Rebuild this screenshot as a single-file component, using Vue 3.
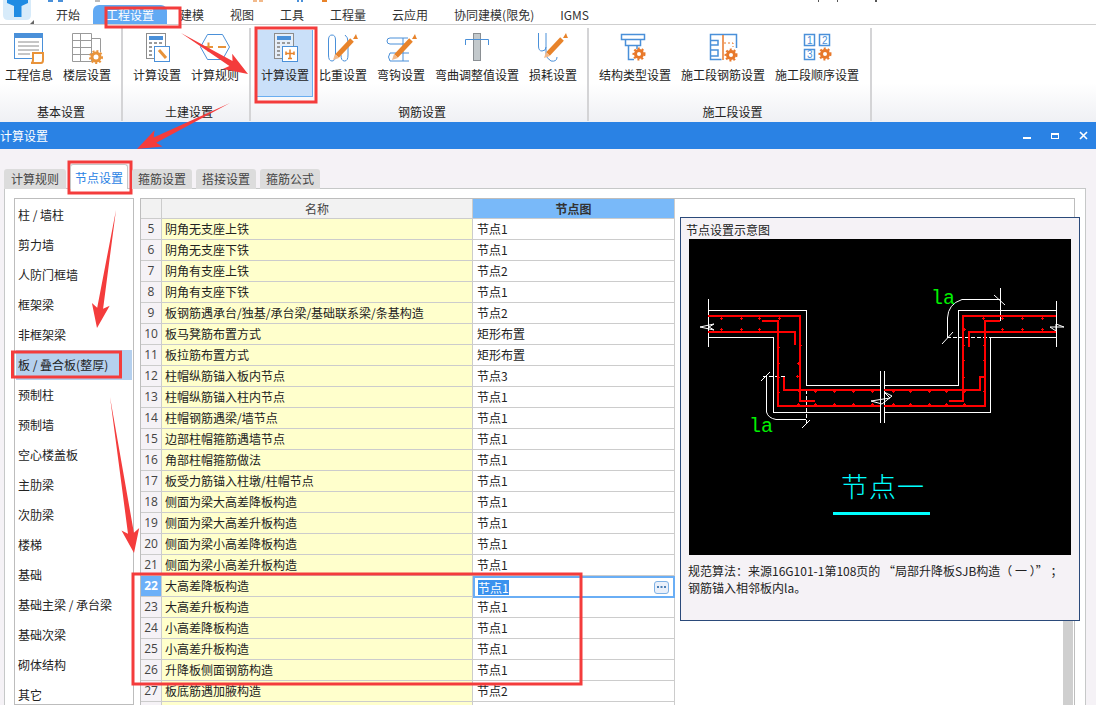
<script setup>
const menus = ['开始', '工程设置', '建模', '视图', '工具', '工程量', '云应用', '协同建模(限免)', 'IGMS']
const tabs = ['计算规则', '节点设置', '箍筋设置', '搭接设置', '箍筋公式']
const sideItems = ['柱 / 墙柱', '剪力墙', '人防门框墙', '框架梁', '非框架梁', '板 / 叠合板(整厚)', '预制柱', '预制墙', '空心楼盖板', '主肋梁', '次肋梁', '楼梯', '基础', '基础主梁 / 承台梁', '基础次梁', '砌体结构', '其它']
const rows = [
  [5, '阴角无支座上铁', '节点1'],
  [6, '阴角无支座下铁', '节点1'],
  [7, '阴角有支座上铁', '节点2'],
  [8, '阴角有支座下铁', '节点1'],
  [9, '板钢筋遇承台/独基/承台梁/基础联系梁/条基构造', '节点2'],
  [10, '板马凳筋布置方式', '矩形布置'],
  [11, '板拉筋布置方式', '矩形布置'],
  [12, '柱帽纵筋锚入板内节点', '节点3'],
  [13, '柱帽纵筋锚入柱内节点', '节点1'],
  [14, '柱帽钢筋遇梁/墙节点', '节点1'],
  [15, '边部柱帽箍筋遇墙节点', '节点1'],
  [16, '角部柱帽箍筋做法', '节点1'],
  [17, '板受力筋锚入柱墩/柱帽节点', '节点1'],
  [18, '侧面为梁大高差降板构造', '节点1'],
  [19, '侧面为梁大高差升板构造', '节点1'],
  [20, '侧面为梁小高差降板构造', '节点1'],
  [21, '侧面为梁小高差升板构造', '节点1'],
  [22, '大高差降板构造', '节点1'],
  [23, '大高差升板构造', '节点1'],
  [24, '小高差降板构造', '节点1'],
  [25, '小高差升板构造', '节点1'],
  [26, '升降板侧面钢筋构造', '节点1'],
  [27, '板底筋遇加腋构造', '节点2'],
  ['', '', '']
]

// red arrows drawn over the screen, from tail to tip
function arrow(x1, y1, x2, y2) {
  const dx = x2 - x1
  const dy = y2 - y1
  const len = Math.hypot(dx, dy)
  const ux = dx / len
  const uy = dy / len
  const nx = -uy
  const ny = ux
  const at = (back, side) => (x2 - ux * back + nx * side).toFixed(1) + ',' + (y2 - uy * back + ny * side).toFixed(1)
  return [x1 + ',' + y1, at(20, 3), at(24, 9), x2 + ',' + y2, at(24, -9), at(20, -3)].join(' ')
}
const arrows = [
  arrow(181, 33, 248, 74),
  arrow(230, 103, 137, 149),
  arrow(116, 210, 97, 328),
  arrow(110, 397, 134, 553)
]

// little rebar ticks in the node drawing
const ticks = [
  [721, 318], [741, 318], [759, 318], [779, 318], [721, 329], [741, 329], [759, 329],
  [778, 347], [778, 363], [778, 377], [778, 392], [800, 345], [798, 363], [797, 376], [798, 390],
  [815, 391], [834, 391], [853, 391], [872, 391], [815, 404], [834, 404], [853, 404], [872, 404], [798, 404],
  [893, 391], [910, 391], [929, 391], [946, 391], [893, 404], [910, 404], [929, 404], [946, 404], [964, 404],
  [964, 391], [984, 391], [963, 345], [963, 360], [963, 377], [984, 345], [984, 360], [984, 376],
  [983, 318], [1022, 318], [1042, 318], [1002, 318], [1022, 329], [1042, 329], [1002, 329], [964, 329]
]

// bottoms of the quick access icons, cut off by the top edge of the screenshot
const topBits = [
  [48, 5, '#4a90d9'], [58, 5, '#4a90d9'], [95, 5, '#bbb'], [253, 4, '#f2b98a'], [259, 4, '#f2b98a'],
  [297, 2, '#4a90d9'], [301, 2, '#4a90d9'], [322, 5, '#e8832a'], [818, 1, '#555'], [837, 1, '#555'], [875, 2, '#555']
]
</script>

<template>
  <div class="screen">
    <div class="menuBar">
      <div class="logo">
        <svg width="32" height="22" viewBox="0 0 32 22">
          <path d="M3 0H31V15Q31 20 26 20H8Q3 20 3 15Z" fill="#d7ebfa" />
          <path d="M7 0H28V3L21.500 6V17H14V6L7 3Z" fill="#1f8be3" />
        </svg>
        <i class="logoCorner"></i>
      </div>
      <div v-for="m in menus" :key="m" class="menuItem" :class="{ active: m === '工程设置' }">{{ m }}</div>
      <i v-for="b in topBits" :key="b[0]" class="topBit" :style="{ left: b[0] + 'px', width: b[1] + 'px', background: b[2] }"></i>
    </div>

    <div class="ribbon">
      <div class="group g1">
        <div class="buttons">
          <div class="rb">
            <svg width="32" height="32" viewBox="0 0 32 32" fill="none">
              <rect x="1.500" y="1.500" width="28" height="25" fill="#fff" stroke="#4a90d9" />
              <rect x="1" y="1" width="29" height="5" fill="#4a90d9" />
              <path d="M5 10H26M5 14H26M5 18H26M5 22H17" stroke="#8c8c8c" />
              <path d="M18 31H28Q30 31 30 28V21H20V28Q20 31 18 31Z" fill="#fff" stroke="#e8933a" stroke-width="2" />
            </svg>
            <span>工程信息</span>
          </div>
          <div class="rb">
            <svg width="32" height="32" viewBox="0 0 32 32" fill="none">
              <path d="M1.500 1.500H20.500V29.500H1.500ZM20.500 6.500H29.500V20M1.500 8.500H20.500M1.500 15.500H20.500M1.500 22.500H20.500M9.500 1.500V29.500" stroke="#9a9a9a" />
              <circle cx="25" cy="25" r="4" stroke="#e8933a" stroke-width="3" />
              <circle cx="25" cy="25" r="6" stroke="#e8933a" stroke-width="2" stroke-dasharray="2 2" />
            </svg>
            <span>楼层设置</span>
          </div>
        </div>
        <div class="groupName">基本设置</div>
      </div>

      <div class="group g2">
        <div class="buttons">
          <div class="rb">
            <svg width="32" height="32" viewBox="0 0 32 32" fill="none">
              <rect x="5.500" y="1.500" width="19" height="25" fill="#fff" stroke="#8c8c8c" />
              <rect x="8" y="4" width="14" height="4" fill="#4a90d9" />
              <path d="M8 11H22M8 15H22M8 19H22M8 23H22" stroke="#9a9a9a" stroke-width="2" stroke-dasharray="3 2" />
              <rect x="13.500" y="14.500" width="15" height="15" fill="#fff" stroke="#4a90d9" />
              <path d="M18 18L25 26" stroke="#e8933a" stroke-width="3" />
            </svg>
            <span>计算设置</span>
          </div>
          <div class="rb">
            <svg width="32" height="32" viewBox="0 0 32 32" fill="none">
              <path d="M8.500 2.500H23.500L30.500 15L23.500 27.500H8.500L1.500 15Z" stroke="#4a90d9" />
              <path d="M5 15H14M9.500 10.500V19.500M19 15H27" stroke="#e8933a" stroke-width="2" />
            </svg>
            <span>计算规则</span>
          </div>
        </div>
        <div class="groupName">土建设置</div>
      </div>

      <div class="group g3">
        <div class="buttons">
          <div class="rb current">
            <svg width="32" height="32" viewBox="0 0 32 32" fill="none">
              <rect x="5.500" y="1.500" width="19" height="25" fill="#e6eef8" stroke="#8c8c8c" />
              <rect x="8" y="4" width="14" height="4" fill="#4a90d9" />
              <path d="M8 11H22M8 15H22M8 19H22M8 23H22" stroke="#9a9a9a" stroke-width="2" stroke-dasharray="3 2" />
              <rect x="13.500" y="14.500" width="15" height="15" fill="#fff" stroke="#4a90d9" />
              <path d="M21 17.500V26.500M17 21.500H25M17 19.500V23M25 19.500V23M19 26.500H23" stroke="#e8832a" stroke-width="1.500" />
            </svg>
            <span>计算设置</span>
          </div>
          <div class="rb">
            <svg width="32" height="32" viewBox="0 0 32 32" fill="none">
              <path d="M5 3Q1.500 3 1.500 8V23Q1.500 29 5 29Q8.500 29 8.500 23V8Q8.500 3 5 3ZM18 3Q21 5 21 10V23Q21 29 17.500 29Q14 29 14 23" stroke="#4a90d9" />
              <path d="M10 24L25 8" stroke="#e8832a" stroke-width="5" />
              <path d="M26 7L29 2L30 5L31 7Z" fill="#e8832a" />
              <path d="M6 28L8 22L12 26Z" fill="#f2b98a" />
            </svg>
            <span>比重设置</span>
          </div>
          <div class="rb">
            <svg width="32" height="32" viewBox="0 0 32 32" fill="none">
              <path d="M23 6H5Q2 6 2 9Q2 12 5 12H20M18 6V29M5 21H24M5 29H24M5 21Q2 25 5 29" stroke="#4a90d9" />
              <path d="M11 24L26 8" stroke="#e8832a" stroke-width="5" />
              <path d="M27 7L30 2L31 5L32 7Z" fill="#e8832a" />
              <path d="M7 28L9 22L13 26Z" fill="#f2b98a" />
            </svg>
            <span>弯钩设置</span>
          </div>
          <div class="rb">
            <svg width="32" height="32" viewBox="0 0 32 32" fill="none">
              <rect x="12.500" y="1.500" width="7" height="27" fill="#c3c9cc" stroke="#8a8f93" />
              <path d="M4.500 13V7.500H27.500V13" stroke="#4a90d9" />
            </svg>
            <span>弯曲调整值设置</span>
          </div>
          <div class="rb">
            <svg width="32" height="32" viewBox="0 0 32 32" fill="none">
              <path d="M1.500 1V14Q1.500 19 5 19Q9 19 9 15M9 1V22Q9 26 14 29Q20 30 20 25" stroke="#4a90d9" />
              <path d="M11 22L25 7" stroke="#e8832a" stroke-width="5" />
              <path d="M26 6L29 1L30 4L31 6Z" fill="#e8832a" />
              <path d="M7 26L9 20L13 24Z" fill="#f2b98a" />
            </svg>
            <span>损耗设置</span>
          </div>
        </div>
        <div class="groupName">钢筋设置</div>
      </div>

      <div class="group g4">
        <div class="buttons">
          <div class="rb">
            <svg width="32" height="32" viewBox="0 0 32 32" fill="none">
              <path d="M2.500 2.500H25.500V7.500H2.500ZM6.500 7.500H21.500V13.500H6.500ZM9.500 13.500V27.500H15" stroke="#4a90d9" stroke-width="1.500" />
              <path d="M18 13.500V17" stroke="#4a90d9" stroke-width="1.500" />
              <circle cx="20" cy="22" r="3.500" stroke="#e8782a" stroke-width="3" />
              <circle cx="20" cy="22" r="5.500" stroke="#e8782a" stroke-width="2" stroke-dasharray="2 2" />
            </svg>
            <span>结构类型设置</span>
          </div>
          <div class="rb">
            <svg width="32" height="32" viewBox="0 0 32 32" fill="none">
              <path d="M16 2.500H3.500V27.500H14.500M16 2.500H29.500V16M4 8.500H11V13H4M4 18H11V24H4" stroke="#4a90d9" stroke-width="1.500" />
              <path d="M16 3V28" stroke="#e8782a" stroke-width="1.500" />
              <path d="M17 11H26V15" stroke="#e8782a" stroke-dasharray="2 2" />
              <circle cx="24" cy="23" r="3.500" stroke="#e8782a" stroke-width="3" />
              <circle cx="24" cy="23" r="5.500" stroke="#e8782a" stroke-width="2" stroke-dasharray="2 2" />
            </svg>
            <span>施工段钢筋设置</span>
          </div>
          <div class="rb">
            <svg width="32" height="32" viewBox="0 0 32 32" fill="none" font-family="Liberation Sans, sans-serif" font-size="10">
              <rect x="3.500" y="2.500" width="10" height="11" stroke="#4a90d9" stroke-width="1.500" />
              <rect x="18.500" y="2.500" width="10" height="11" stroke="#4a90d9" stroke-width="1.500" />
              <rect x="3.500" y="17.500" width="10" height="10" stroke="#4a90d9" stroke-width="1.500" />
              <text x="6" y="12" fill="#4a90d9">1</text>
              <text x="21" y="12" fill="#4a90d9">2</text>
              <text x="6" y="26" fill="#4a90d9">3</text>
              <circle cx="24" cy="22" r="3.500" stroke="#e8782a" stroke-width="3" />
              <circle cx="24" cy="22" r="5.500" stroke="#e8782a" stroke-width="2" stroke-dasharray="2 2" />
            </svg>
            <span>施工段顺序设置</span>
          </div>
        </div>
        <div class="groupName">施工段设置</div>
      </div>
    </div>

    <div class="titleBar">
      <span class="titleText">计算设置</span>
      <div class="winBtns">
        <i class="winMin"></i>
        <i class="winMax"></i>
        <svg width="9" height="9" viewBox="0 0 9 9"><path d="M1 1L8 8M8 1L1 8" stroke="#fff" stroke-width="1.600" /></svg>
      </div>
    </div>

    <div class="dialog">
      <div class="tabs">
        <div v-for="t in tabs" :key="t" class="tab" :class="{ on: t === '节点设置' }">{{ t }}</div>
      </div>

      <div class="panel">
        <div class="sideList">
          <div v-for="s in sideItems" :key="s" class="sideItem" :class="{ on: s === '板 / 叠合板(整厚)' }">{{ s }}</div>
        </div>

        <div class="tableBox">
          <div class="grid">
            <div class="row head">
              <div class="num"></div>
              <div class="name">名称</div>
              <div class="val">节点图</div>
            </div>
            <div v-for="(r, i) in rows" :key="i" class="row" :class="{ sel: r[0] === 22 }">
              <div class="num">{{ r[0] }}</div>
              <div class="name">{{ r[1] }}</div>
              <div class="val">
                <span class="valText">{{ r[2] }}</span>
                <span v-if="r[0] === 22" class="more">
                  <svg width="9" height="3" viewBox="0 0 9 3"><path d="M0 0H2V2H0ZM3.500 0H5.500V2H3.500ZM7 0H9V2H7Z" fill="#4c7fb5" /></svg>
                </span>
              </div>
            </div>
          </div>
          <div class="scrollTrack"><div class="scrollThumb"></div></div>
        </div>
      </div>
    </div>

    <!-- preview popup that lies over the grid -->
    <div class="preview">
      <div class="previewTitle">节点设置示意图</div>
      <svg class="drawing" width="382" height="316" viewBox="689 239 382 316" fill="none" shape-rendering="crispEdges">
        <g stroke="#fff">
          <path d="M708.500 299V347M708.500 310.500H806.500V385.500H880M884 385.500H958.500V310.500H1056.500M1056.500 301V347" />
          <path d="M708.500 337.500H773.500V412.500H880M884 412.500H990.500V337.500H1056.500" />
          <path d="M880.500 371V423M884.500 371V423" />
          <path d="M1000.500 288V311M962 299.500H1000" />
          <path d="M1000.500 311V322M947 337.500H990M763 376.500H785M806.500 390V424" stroke-dasharray="4 2" />
          <path d="M947.500 337V318Q948 304 962 299.500" shape-rendering="auto" />
          <path d="M766.500 376V412Q768 418 776 419.500H806" shape-rendering="auto" />
          <path d="M942 344L953 332M994 295L1005 305M761 381L770 372M802 428L810 420" shape-rendering="auto" />
          <path d="M700 327L714 324L709 327L714 330L700 327ZM1050 327L1064 327L1056 324V331ZM871 401L890 398L884 392L892 396L882 404Z" shape-rendering="auto" />
        </g>
        <g stroke="#f00" stroke-width="2">
          <path d="M708 316H800V401H815" />
          <path d="M708 332H795V345" />
          <path d="M762 321H778V406H880M884 406H985V321H1000" />
          <path d="M784 377V390H880M884 390H980V377H985" />
          <path d="M949 401H963V316H1056" />
          <path d="M969 347V332H1056" />
        </g>
        <g stroke="#f00">
          <path v-for="(t, i) in ticks" :key="i" :d="'M' + (t[0] - 1.500) + ' ' + t[1] + 'H' + (t[0] + 1.500) + 'M' + t[0] + ' ' + (t[1] - 1.500) + 'V' + (t[1] + 1.500)" />
        </g>
        <text x="931" y="304" class="laText">la</text>
        <text x="749" y="432" class="laText">la</text>
        <text x="841" y="497" class="nodeText">节点一</text>
        <rect x="833" y="512" width="97" height="3" fill="#00ffff" />
      </svg>
      <div class="previewNote">规范算法：来源16G101-1第108页的 “局部升降板SJB构造（ 一 ）” ；<br />钢筋锚入相邻板内la。</div>
    </div>

    <!-- red markup drawn on top of the screenshot -->
    <svg class="markup" width="1096" height="705" viewBox="0 0 1096 705" fill="none">
      <g stroke="#f43c3c" stroke-width="3">
        <rect x="106" y="8" width="74" height="19" />
        <rect x="256" y="28" width="60" height="74" />
        <rect x="69" y="162" width="62" height="31" />
        <rect x="12.500" y="352" width="108" height="25" />
        <rect x="133" y="574" width="448" height="110" />
      </g>
      <polygon v-for="(a, i) in arrows" :key="i" :points="a" fill="#f43c3c" />
    </svg>
  </div>
</template>

<style scoped>
.screen {
  position: relative;
  width: 1096px;
  height: 705px;
  overflow: hidden;
  display: flex;
  flex-direction: column;
  background: #fff;
  color: #222;
  font-family: "Noto Sans CJK SC", "Noto Sans", sans-serif;
  font-size: 12px;
  line-height: 16px;
}

.menuBar {
  position: relative;
  display: flex;
  align-items: flex-end;
  flex: none;
  height: 25px;
  box-sizing: border-box;
  border-bottom: 1px solid #cfcfcf;
}
.topBit {
  position: absolute;
  top: 0;
  height: 2px;
}
.logo {
  position: relative;
  width: 43px;
  height: 24px;
}
.logo svg {
  display: block;
}
.logoCorner {
  position: absolute;
  left: 30px;
  top: 20px;
  border-left: 4px solid transparent;
  border-bottom: 4px solid #666;
}
.menuItem {
  padding: 0 13px;
  height: 19px;
  line-height: 19px;
  color: #333;
}
.menuItem.active {
  background: #61a9f3;
  border-radius: 6px 6px 0 0;
  color: #fff;
}

.ribbon {
  display: flex;
  flex: none;
  height: 97px;
  background: linear-gradient(#fff 0, #fff 60%, #eff0f4 100%);
}
.group {
  display: flex;
  flex-direction: column;
  box-sizing: border-box;
  height: 93px;
  margin-top: 3px;
  border-right: 2px solid #d4d4d6;
}
.g1 { width: 123px; padding-left: 1px; }
.g2 { width: 128px; padding-left: 6px; }
.g3 { width: 338px; padding-left: 6px; }
.g4 { width: 283px; padding-left: 6px; }
.buttons {
  display: flex;
  gap: 2px;
  height: 70px;
  flex: none;
  padding-top: 2px;
  box-sizing: border-box;
}
.rb {
  display: flex;
  flex-direction: column;
  align-items: center;
  padding: 2px 4px 0;
  box-sizing: border-box;
  height: 67px;
  white-space: nowrap;
}
.rb span {
  margin-top: 3px;
}
.rb svg {
  flex: none;
}
.rb.current {
  background: #cae0f9;
  border-right: 1px solid #6aaef0;
  border-bottom: 1px solid #6aaef0;
  padding-right: 3px;
}
.groupName {
  text-align: center;
  margin-top: 6px;
  line-height: 16px;
}

.titleBar {
  display: flex;
  align-items: center;
  justify-content: space-between;
  flex: none;
  height: 27px;
  background: #2a82e4;
  color: #fff;
}
.winBtns {
  display: flex;
  align-items: center;
  gap: 20px;
  margin-right: 8px;
}
.winMin {
  width: 8px;
  height: 2px;
  margin-top: 4px;
  background: #fff;
}
.winMax {
  width: 8px;
  height: 6px;
  box-sizing: border-box;
  border: 1px solid #fff;
  border-top-width: 2px;
}

.dialog {
  flex: 1;
  min-height: 0;
  display: flex;
  flex-direction: column;
  background: #f5f2f6;
  padding: 0 10px 0 4px;
}
.tabs {
  display: flex;
  align-items: flex-end;
  flex: none;
  height: 40px;
  gap: 4px;
  margin-bottom: -1px;
  position: relative;
  z-index: 1;
}
.tab {
  width: 60px;
  height: 20px;
  line-height: 20px;
  text-align: center;
  background: #dcdcdc;
  border-radius: 3px 3px 0 0;
  color: #444;
}
.tab:first-child {
  width: 62px;
}
.tab.on {
  width: 58px;
  height: 25px;
  line-height: 25px;
  background: #fff;
  color: #2a82e4;
  border: 1px solid #c6c8c8;
  border-bottom: 0;
  box-sizing: border-box;
}
.panel {
  flex: 1;
  min-height: 0;
  display: flex;
  gap: 6px;
  padding: 9px 10px 0 9px;
  background: #fff;
  border: 1px solid #c6c8c8;
  border-bottom: 0;
}

.sideList {
  width: 120px;
  flex: none;
  box-sizing: border-box;
  border: 1px solid #bdbdbd;
  padding: 1px;
}
.sideItem {
  height: 30px;
  line-height: 30px;
  padding-left: 2px;
  white-space: nowrap;
}
.sideItem.on {
  background: #b5d0ee;
}

.tableBox {
  flex: 1;
  min-width: 0;
  display: flex;
  justify-content: space-between;
  border: 1px solid #bdbdbd;
  border-left: 0;
  border-bottom: 0;
}
.grid {
  width: 535px;
  border-left: 1px solid #bdbdbd;
  box-sizing: border-box;
}
.row {
  display: flex;
  height: 21px;
  line-height: 20px;
  box-sizing: border-box;
  border-bottom: 1px solid #ccc;
}
.row.head {
  height: 20px;
  line-height: 19px;
}
.num {
  width: 21px;
  flex: none;
  box-sizing: border-box;
  border-right: 1px solid #ccc;
  background: #f5f2f6;
  text-align: center;
  font-family: "Open Sans", sans-serif;
  font-size: 12px;
  color: #444;
}
.name {
  width: 311px;
  flex: none;
  box-sizing: border-box;
  padding-left: 3px;
  border-right: 1px solid #ccc;
  background: #ffffcc;
  white-space: nowrap;
}
.val {
  flex: 1;
  min-width: 0;
  box-sizing: border-box;
  padding-left: 4px;
  border-right: 1px solid #ccc;
  white-space: nowrap;
}
.head .num,
.head .name {
  background: #f2f2f2;
  text-align: center;
  padding-left: 0;
  color: #444;
}
.head .val {
  background: #79b9f9;
  text-align: center;
  padding-left: 0;
  color: #333;
  font-weight: 700;
}
.sel .num {
  background: #6cb0f8;
  color: #fff;
  font-weight: 700;
}
.sel .val {
  display: flex;
  align-items: center;
  justify-content: space-between;
  border: 2px solid #6aaef5;
  padding: 0 4px 0 3px;
  margin-bottom: -1px;
  height: 22px;
  background: #fff;
  position: relative;
}
.sel .valText {
  background: #3a92ee;
  color: #fff;
  line-height: 15px;
}
.more {
  display: flex;
  align-items: center;
  justify-content: center;
  width: 15px;
  height: 13px;
  border: 1px solid #7fb2e6;
  border-radius: 3px;
  background: #eaf0fa;
  box-sizing: border-box;
}
.more svg {
  display: block;
}
.scrollTrack {
  width: 10px;
  flex: none;
  margin-right: 1px;
}
.scrollThumb {
  height: 90px;
  margin-top: 421px;
  background: #cfcfcf;
}

.preview {
  position: absolute;
  left: 680px;
  top: 217px;
  width: 400px;
  height: 404px;
  box-sizing: border-box;
  border: 1px solid #2b4a7a;
  background: #f5f2f6;
  padding: 4px 7px 0 8px;
}
.previewTitle {
  margin-left: -3px;
  height: 17px;
  line-height: 16px;
}
.drawing {
  display: block;
  background: #000;
}
.laText {
  fill: #00f000;
  font-family: "Liberation Mono", monospace;
  font-size: 20px;
}
.nodeText {
  fill: #00ffff;
  font-family: "Noto Sans CJK SC", sans-serif;
  font-weight: 300;
  font-size: 27px;
  letter-spacing: 1px;
}
.previewNote {
  margin: 7px 0 0 -1px;
  line-height: 17px;
  white-space: nowrap;
}
.markup {
  position: absolute;
  left: 0;
  top: 0;
  pointer-events: none;
}
</style>

<style>
html, body {
  margin: 0;
  overflow: hidden;
}
</style>
